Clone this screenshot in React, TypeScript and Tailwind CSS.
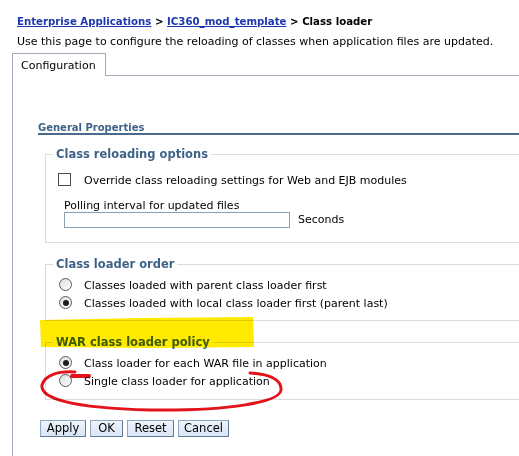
import type { ReactNode } from 'react'

function Radio({ checked }: { checked?: boolean }) {
  return (
    <span className="flex h-[13px] w-[13px] shrink-0 items-center justify-center rounded-full border border-[#5a5a5a] bg-linear-to-br from-[#dedede] to-white">
      {checked && <span className="h-[6px] w-[6px] rounded-full bg-[#1e1e1e]" />}
    </span>
  )
}

function Group({ title, className, children }: { title: string; className: string; children: ReactNode }) {
  return (
    <fieldset className={`ml-[7px] w-[520px] border border-[#dcdcdc] p-0 ${className}`}>
      <legend className="ml-[7px] px-[3px] text-[11.5px] leading-[13px] font-bold text-[#3f6386]">{title}</legend>
      {children}
    </fieldset>
  )
}

function Option({ label, checked }: { label: string; checked?: boolean }) {
  return (
    <div className="flex h-[13px] items-center">
      <Radio checked={checked} />
      <span className="ml-[12px] pt-[1px] leading-[13px]">{label}</span>
    </div>
  )
}

export default function App() {
  const buttons = [
    { label: 'Apply', w: 'w-[46px]' },
    { label: 'OK', w: 'w-[33px]' },
    { label: 'Reset', w: 'w-[47px]' },
    { label: 'Cancel', w: 'w-[51px]' },
  ]

  return (
    <div className="relative h-[456px] w-[519px] overflow-hidden bg-white font-['DejaVu_Sans',sans-serif] text-[11px] text-black">
      {/* Breadcrumb */}
      <div className="pl-[17px] pt-[15px] text-[10.2px] leading-[13px] font-bold">
        <span className="text-[#1d38ad] underline">Enterprise Applications</span>
        {' > '}
        <span className="text-[#1d38ad] underline">IC360_mod_template</span>
        {' > Class loader'}
      </div>
      <div className="mt-[7px] pl-[17px] leading-[14px]">
        Use this page to configure the reloading of classes when application files are updated.
      </div>

      {/* Tab panel */}
      <div className="ml-[12px] mt-[4px] w-[560px] border-l border-[#a3adba]">
        <div className="flex h-[23px]">
          <div className="w-[93px] border-t border-r border-[#a3adba] pl-[8px] pt-[6px] leading-[12px]">Configuration</div>
          <div className="flex-1 border-b border-[#a3adba]" />
        </div>

        <div className="pl-[25px] pb-[60px]">
          <div className="mt-[46px] border-b-2 border-[#4b6a8a] text-[10px] leading-[11px] font-bold text-[#3f6386]">
            General Properties
          </div>

          <Group title="Class reloading options" className="mt-[13px]">
            <div className="pl-[12px] pb-[14px]">
              <div className="mt-[12px] flex h-[13px] items-center">
                <span className="h-[13px] w-[13px] border border-[#4a4a4a] bg-white" />
                <span className="ml-[13px] pt-[2px] leading-[13px]">Override class reloading settings for Web and EJB modules</span>
              </div>
              <div className="ml-[6px] mt-[14px] leading-[12px]">Polling interval for updated files</div>
              <div className="ml-[6px] flex items-center">
                <div className="h-[16px] w-[226px] border border-[#8aa0b8] bg-white" />
                <span className="ml-[8px] leading-[12px]">Seconds</span>
              </div>
            </div>
          </Group>

          <Group title="Class loader order" className="mt-[15px]">
            <div className="flex flex-col gap-[5px] pl-[13px] pt-[7px] pb-[11px]">
              <Option label="Classes loaded with parent class loader first" />
              <Option label="Classes loaded with local class loader first (parent last)" checked />
            </div>
          </Group>

          <Group title="WAR class loader policy" className="mt-[15px]">
            <div className="flex flex-col gap-[5px] pl-[13px] pt-[7px] pb-[12px]">
              <Option label="Class loader for each WAR file in application" checked />
              <Option label="Single class loader for application" />
            </div>
          </Group>

          <div className="ml-[2px] mt-[20px] flex gap-[4px]">
            {buttons.map((b) => (
              <button
                key={b.label}
                className={`h-[17px] ${b.w} border border-[#8ea6c4] border-r-[#5f7898] border-b-[#5f7898] bg-linear-to-b from-[#eef3fb] to-[#d9e5f5] font-['DejaVu_Sans',sans-serif] text-[11.5px] leading-[15px] text-black`}
              >
                {b.label}
              </button>
            ))}
          </div>
        </div>
      </div>

      {/* Highlighter and pen annotations */}
      <svg className="pointer-events-none absolute left-0 top-0 mix-blend-multiply" width="519" height="456">
        <path d="M40 320 L140 318 L253 317 L254 347 L150 348 L41 347 Z" fill="#ffea00" />
        <path
          d="M75 372 C58 371 45 375 42 385 C40 398 70 408 150 410 C230 411 280 402 281 390 C282 379 268 374 250 373"
          fill="none"
          stroke="#e3121b"
          strokeWidth="3"
          strokeLinecap="round"
        />
        <path d="M72 376 L89 376" stroke="#e3121b" strokeWidth="4" strokeLinecap="round" />
      </svg>
    </div>
  )
}
